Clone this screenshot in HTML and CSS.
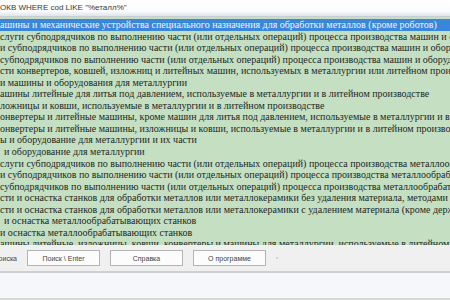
FILE: index.html
```html
<!DOCTYPE html>
<html lang="ru">
<head>
    <meta charset="UTF-8">
    <title>Поиск ОКПД</title>
    <link rel="stylesheet" href="styles.css">
</head>
<body>
    <div class="window">
        <div class="query">ОКВ WHERE cod LIKE "%еталл%"</div>

        <div class="list">
            <div class="row active">ашины и механические устройства специального назначения для обработки металлов (кроме роботов)</div>
            <div class="row">слуги субподрядчиков по выполнению части (или отдельных операций) процесса производства машин и оборудования для металлургии</div>
            <div class="row">и субподрядчиков по выполнению части (или отдельных операций) процесса производства машин и оборудования для металлургии</div>
            <div class="row">субподрядчиков по выполнению части (или отдельных операций) процесса производства машин и оборудования</div>
            <div class="row">сти конвертеров, ковшей, изложниц и литейных машин, используемых в металлургии или литейном производстве</div>
            <div class="row">и машины и оборудования для металлургии</div>
            <div class="row">ашины литейные для литья под давлением, используемые в металлургии и в литейном производстве</div>
            <div class="row">ложницы и ковши, используемые в металлургии и в литейном производстве</div>
            <div class="row">онвертеры и литейные машины, кроме машин для литья под давлением, используемые в металлургии и в литейном производстве</div>
            <div class="row">онвертеры и литейные машины, изложницы и ковши, используемые в металлургии и в литейном производстве</div>
            <div class="row">ы и оборудование для металлургии и их части</div>
            <div class="row indent">и оборудование для металлургии</div>
            <div class="row">слуги субподрядчиков по выполнению части (или отдельных операций) процесса производства металлообрабатывающего оборудования</div>
            <div class="row">и субподрядчиков по выполнению части (или отдельных операций) процесса производства металлообрабатывающего оборудования</div>
            <div class="row">субподрядчиков по выполнению части (или отдельных операций) процесса производства металлообрабатывающего оборудования</div>
            <div class="row">сти и оснастка станков для обработки металлов или металлокерамики без удаления материала, методами пластической деформации</div>
            <div class="row">сти и оснастка станков для обработки металлов или металлокерамики с удалением материала (кроме держателей инструментов)</div>
            <div class="row indent">и оснастка металлообрабатывающих станков</div>
            <div class="row">и оснастка металлообрабатывающих станков</div>
            <div class="row">ашины литейные, изложницы, ковши, конвертеры и машины для металлургии, используемые в литейном производстве и обработке</div>
        </div>

        <div class="toolbar">
            <span class="label">поиска</span>
            <button>Поиск \ Enter</button>
            <button>Справка</button>
            <button>О программе</button>
            <span class="dot"></span>
        </div>

        <div class="status"></div>
    </div>
</body>
</html>
```

FILE: styles.css
```css
body {
    margin: 0;
    overflow: hidden;
}
.window {
    width: 450px;
    height: 300px;
    display: flex;
    flex-direction: column;
    background: #f0f0f0;
}
.query {
    height: 16px;
    line-height: 15px;
    font-family: "Liberation Sans", Arial, sans-serif;
    font-size: 8px;
    color: #3a3a3a;
    white-space: nowrap;
    background: linear-gradient(#ffffff, #fafbfc 70%, #dfe3e8);
    border-bottom: 1px solid #c9ced6;
}
.list {
    height: 226px;
    overflow: hidden;
    padding-top: 2px;
    background: #c4dfc2;
    font-family: "Liberation Serif", "Times New Roman", serif;
    font-size: 10px;
    color: #1e281e;
}
.row {
    height: 11.55px;
    line-height: 11.55px;
    white-space: nowrap;
}
.row.active {
    background: #3a86d8;
    color: #eef4fb;
}
.row.indent {
    padding-left: 4px;
}
.toolbar {
    height: 26px;
    display: flex;
    align-items: center;
    gap: 10px;
    background: #f0f0f0;
    border-bottom: 2px solid #cfcfcf;
}
.toolbar .label {
    width: 17px;
    font-family: "Liberation Sans", Arial, sans-serif;
    font-size: 7px;
    color: #444;
    white-space: nowrap;
    direction: rtl;
    overflow: hidden;
}
.toolbar button {
    width: 73px;
    height: 16px;
    padding: 0;
    background: #fcfcfc;
    border: 1px solid #b4b4b4;
    font-family: "Liberation Sans", Arial, sans-serif;
    font-size: 7px;
    color: #444;
}
.toolbar .dot {
    width: 2px;
    height: 2px;
    border-radius: 50%;
    background: #c8c8c8;
}
.status {
    flex: 1;
    background: #f5f7fb;
    border-bottom: 2px solid #d6d6d6;
}
```
